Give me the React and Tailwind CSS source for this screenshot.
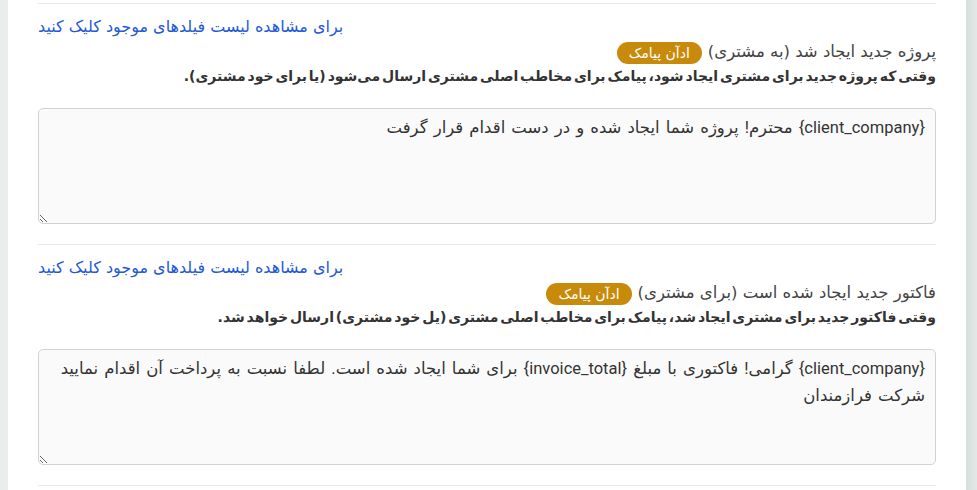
import React from "react";

const sections = [
  {
    title: "پروژه جدید ایجاد شد (به مشتری)",
    desc: "وقتی که پروژه جدید برای مشتری ایجاد شود، پیامک برای مخاطب اصلی مشتری ارسال می‌شود (یا برای خود مشتری).",
    body: "{client_company} محترم! پروژه شما ایجاد شده و در دست اقدام قرار گرفت",
  },
  {
    title: "فاکتور جدید ایجاد شده است (برای مشتری)",
    desc: "وقتی فاکتور جدید برای مشتری ایجاد شد، پیامک برای مخاطب اصلی مشتری (یل خود مشتری) ارسال خواهد شد.",
    body: "{client_company} گرامی! فاکتوری با مبلغ {invoice_total} برای شما ایجاد شده است. لطفا نسبت به پرداخت آن اقدام نمایید\nشرکت فرازمندان",
  },
];

function TemplateRow({ title, desc, body }) {
  return (
    <div className="border-t border-[#e6e8ea] pt-[12px] pb-[20px]">
      <div className="text-left text-[16px] leading-[22px] text-[#2459d6] cursor-pointer">
        برای مشاهده لیست فیلدهای موجود کلیک کنید
      </div>
      <div className="mt-[2px] text-[16.5px] leading-[24px] text-[#444]">
        {title}
        <span className="mr-[6px] inline-block rounded-full bg-[#c88a0b] px-[12px] text-[14px] leading-[22px] text-white align-middle">
          ادآن پیامک
        </span>
      </div>
      <div className="text-[14px] leading-[24px] font-bold text-[#333] [word-spacing:-3px]">{desc}</div>
      <textarea
        dir="rtl"
        defaultValue={body}
        className="mt-[20px] block h-[116px] w-full rounded-[5px] border border-[#cfd3d8] bg-[#fafafa] px-[10px] py-[5px] font-['Roboto','DejaVu_Sans',sans-serif] text-[16.5px] leading-[27px] text-[#333] outline-none [word-spacing:2px]"
      />
    </div>
  );
}

export default function App() {
  return (
    <div
      dir="rtl"
      className="flex h-[490px] w-[977px] overflow-hidden bg-white font-['DejaVu_Sans',sans-serif]"
    >
      <div className="w-[11px] shrink-0 bg-gradient-to-r from-[#d7dedb] to-[#e4e9e7]" />
      <div className="flex-1 bg-white px-[30px] pt-[3px]">
        {sections.map((s, i) => (
          <TemplateRow key={i} {...s} />
        ))}
        <div className="border-t border-[#e6e8ea]" />
      </div>
      <div className="w-[8px] shrink-0 bg-[#e9eeec]" />
    </div>
  );
}
